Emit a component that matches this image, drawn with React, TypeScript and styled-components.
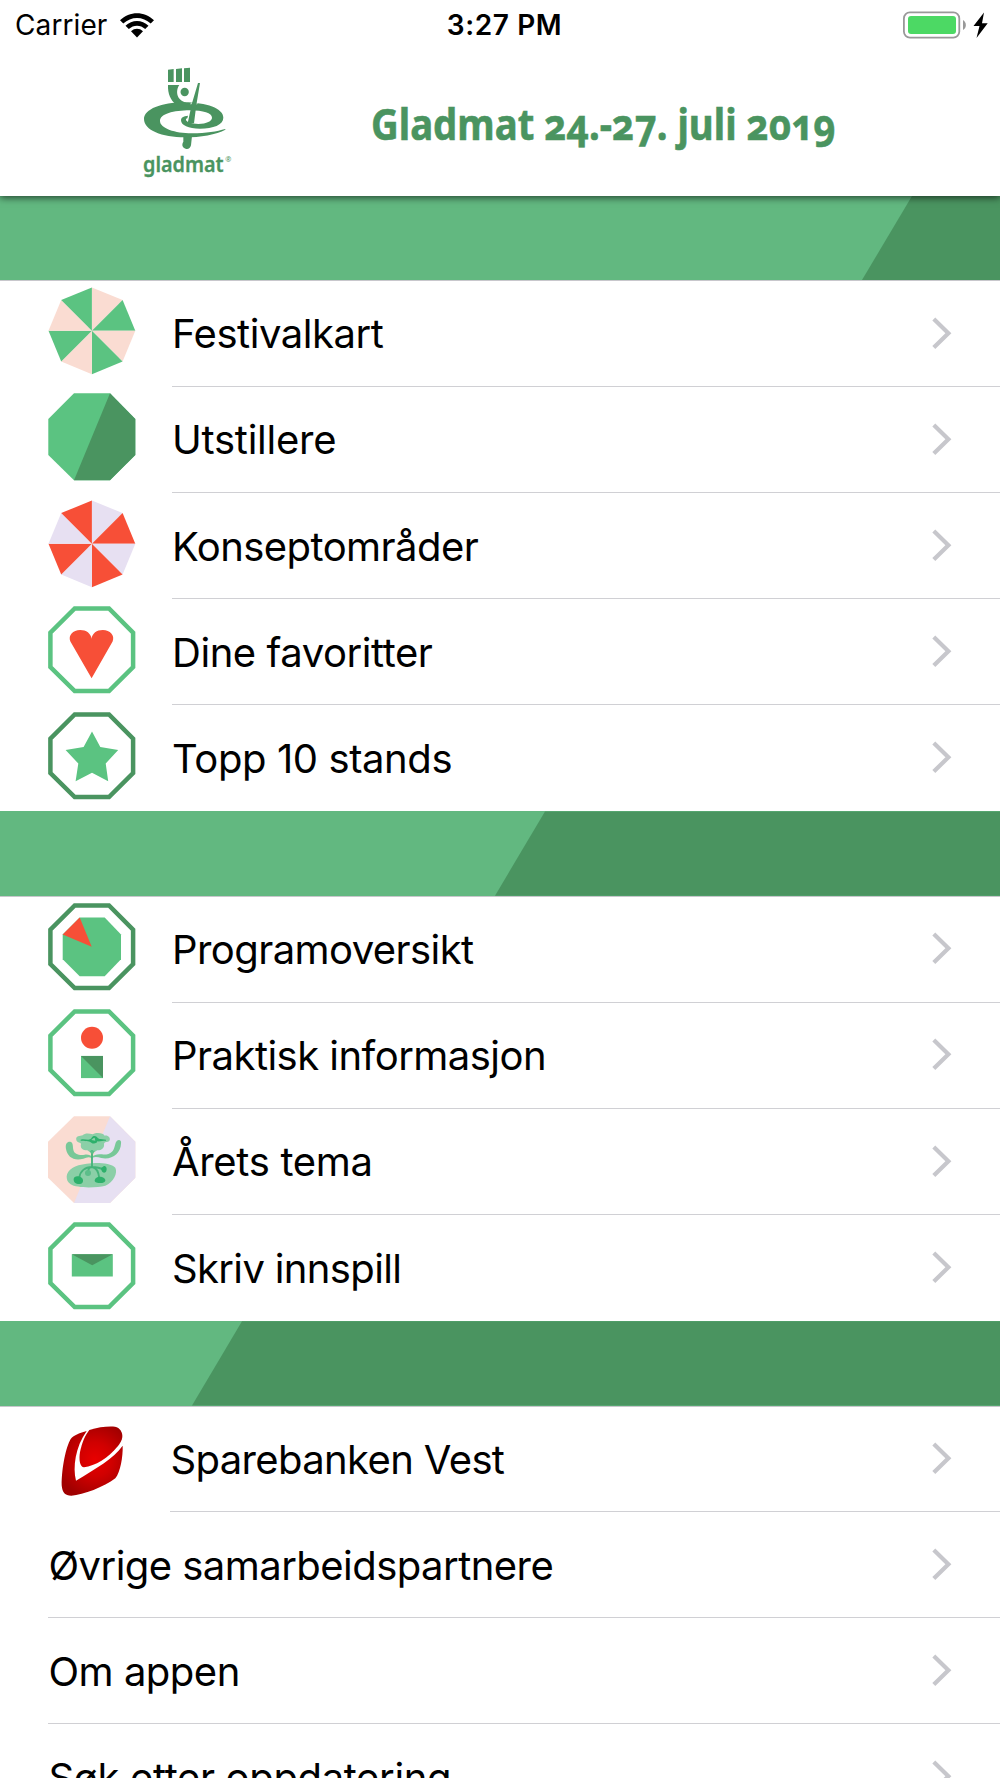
import React from "react";
import styled, { createGlobalStyle } from "styled-components";

const LIGHT = "#5bc381";
const DARK = "#4a9460";
const RED = "#f74f37";
const PEACH = "#fadcd2";
const LILAC = "#e7e0f2";

const Global = createGlobalStyle`
  html, body { margin: 0; padding: 0; background: #fff; }
  body { overflow: hidden; }
`;

const Screen = styled.div`
  width: 1000px;
  height: 1778px;
  overflow: hidden;
  background: #fff;
  color: #000;
  font-family: Inter, "Liberation Sans", sans-serif;
  display: flex;
  flex-direction: column;
`;

const Header = styled.header`
  flex: none;
  height: 196px;
  background: #fff;
  position: relative;
  z-index: 1;
  box-shadow: 0 2px 7px rgba(0, 0, 0, 0.6);
`;

const StatusBar = styled.div`
  height: 50px;
  display: grid;
  grid-template-columns: 1fr auto 1fr;
  align-items: center;
  padding: 0 12px 0 15px;
  font-size: 28px;
  line-height: 50px;
`;

const Carrier = styled.div`
  display: flex;
  align-items: center;
  gap: 13px;
  letter-spacing: 0.1px;
`;

const Clock = styled.div`
  font-weight: 600;
  letter-spacing: 0.6px;
  padding-left: 6px;
`;

const Power = styled.div`
  display: flex;
  justify-content: flex-end;
`;

const Brand = styled.div`
  display: flex;
  height: 140px;
`;

const LogoBox = styled.div`
  margin-left: 120px;
  width: 251px;
`;

const Title = styled.h1`
  margin: 0;
  font: 700 43.5px/50px "Noto Sans", "Open Sans", sans-serif;
  font-feature-settings: "onum" 1;
  color: ${DARK};
  -webkit-text-stroke: 0.6px ${DARK};
  white-space: nowrap;
  padding-top: 48px;
  transform: scaleX(0.881);
  transform-origin: 0 0;
`;

const Band = styled.div<{ $height: number }>`
  flex: none;
  height: ${(p) => p.$height}px;
  box-sizing: border-box;
  background: #62b880;
  border-bottom: 1px solid #c8c7cc;
  display: flex;
`;

const BandShade = styled.div<{ $start: number }>`
  flex: 1;
  margin-left: ${(p) => p.$start}px;
  background: ${DARK};
  clip-path: polygon(50px 0, 100% 0, 100% 100%, 0 100%);
`;

const List = styled.ul<{ $row: number }>`
  flex: none;
  list-style: none;
  margin: 0;
  padding: 0;
  > li { height: ${(p) => p.$row}px; }
`;

const Row = styled.li`
  display: flex;
  padding-left: 48px;
  box-sizing: border-box;
`;

const IconSlot = styled.div<{ $width: number; $top: number }>`
  width: ${(p) => p.$width}px;
  padding-top: ${(p) => p.$top}px;
  box-sizing: border-box;
  svg { display: block; }
`;

const Body = styled.div<{ $last?: boolean }>`
  flex: 1;
  display: flex;
  justify-content: space-between;
  align-items: flex-start;
  padding: 28.4px 48px 0 0;
  box-sizing: border-box;
  border-bottom: 1px solid ${(p) => (p.$last ? "transparent" : "#d0d0d4")};
  svg { display: block; margin-top: 6.2px; }
`;

const Label = styled.span<{ $track: number; $inset?: number }>`
  font-size: 40px;
  line-height: 50px;
  white-space: nowrap;
  padding-left: ${(p) => p.$inset ?? 0}px;
  letter-spacing: ${(p) => p.$track}px;
`;

const OCT = "26,.3 62,.3 87.3,26 87.3,62 62,87.3 26,87.3 .3,62 .3,26";
const OCT_RING = "26.7,2.4 61,2.4 85.1,26.6 85.1,61 61,85.1 26.7,85.1 2.4,61 2.4,26.6";

const Svg = ({ children, viewBox = "0 0 88 88" }: { children: React.ReactNode; viewBox?: string }) => (
  <svg width="88" height="88" viewBox={viewBox}>{children}</svg>
);

const Ring = ({ color }: { color: string }) => (
  <polygon points={OCT_RING} fill="none" stroke={color} strokeWidth="4.5" />
);

const Wheel = ({ a, b }: { a: string; b: string }) => {
  const pt = (i: number) => {
    const t = (i * Math.PI) / 4 - Math.PI / 2;
    return `${43.9 + 43.4 * Math.cos(t)},${43.8 + 43.4 * Math.sin(t)}`;
  };
  return (
    <Svg>
      {[0, 1, 2, 3, 4, 5, 6, 7].map((i) => (
        <polygon key={i} points={`43.9,43.8 ${pt(i)} ${pt(i + 1)}`} fill={i % 2 ? b : a} />
      ))}
    </Svg>
  );
};

const Exhibitors = () => (
  <Svg>
    <polygon points={OCT} fill={LIGHT} />
    <polygon points="62,.3 87.3,26 87.3,62 62,87.3 26,87.3" fill={DARK} />
  </Svg>
);

const Heart = () => (
  <Svg>
    <Ring color={LIGHT} />
    <path d="M43.6 72.3 22.4 35.4C19.8 29.4 25 24 32.2 24c6 0 10.8 3.4 11.4 8.8C44 27.4 48.8 24 54.8 24c7.2 0 12.4 5.4 9.8 11.4Z" fill={RED} />
  </Svg>
);

const Star = () => (
  <Svg>
    <Ring color={DARK} />
    <polygon points="44,19.4 52.3,35.1 70.2,38.1 57.7,51.4 60.2,69.3 44,60.8 27.6,69.3 30.3,51.4 17.6,38.1 35.6,35.1" fill={LIGHT} />
  </Svg>
);

const Programme = () => (
  <Svg>
    <Ring color={DARK} />
    <polygon points="31.7,14.6 56.7,14.6 73,31.6 73,56.3 56.7,73.2 31.7,73.2 14.7,56.3 14.7,31.6" fill={LIGHT} />
    <polygon points="31.7,14.6 14.7,31.6 43.7,43.7" fill={RED} />
  </Svg>
);

const Info = () => (
  <Svg>
    <Ring color={LIGHT} />
    <circle cx="44" cy="28.8" r="11" fill={RED} />
    <rect x="33" y="46.9" width="22" height="22.2" fill={LIGHT} />
    <polygon points="33,46.9 55,46.9 55,69.1" fill={DARK} />
  </Svg>
);

const Theme = () => (
  <Svg viewBox="54 47 264 264">
    <polygon points="132,48 240,48 316,124 316,232 240,308 132,308 54,232 54,124" fill={PEACH} />
    <polygon points="240,48 316,124 316,232 240,308 132,308" fill={LILAC} />
    <g fill="#8bcfa7">
      <path d="M110 228C112 208 134 194 170 190C200 186 243 188 256 202C264 218 250 246 226 256C200 263 140 264 122 252C112 246 110 238 110 228Z" />
      <path d="M139 119C136 106 150 108 158 105C164 98 176 98 188 102C200 95 220 98 224 106C234 104 242 112 239 120C236 128 226 122 222 130C224 142 216 150 202 150L192 156L180 156L172 150C158 150 150 144 153 130C148 124 142 128 139 119Z" />
    </g>
    <g fill="#78c898">
      <path d="M108 146C105 130 112 123 121 124C130 126 128 138 130 148C132 162 150 166 164 163C174 161 184 166 186 170V174C176 168 170 172 160 175C132 183 112 170 108 146Z" />
      <path d="M273 130C275 120 268 117 261 121C254 127 256 144 246 154C238 162 226 164 216 162C202 160 192 164 187 168V172C196 168 204 170 214 173C246 180 272 158 273 130Z" />
    </g>
    <g fill="none" stroke="#45b379" strokeWidth="5.5">
      <path d="M186 150V202M186 200C165 200 150 212 148 232M186 200C200 202 206 216 208 234M186 200C176 200 174 210 174 218M186 200C200 200 210 202 220 208" />
    </g>
    <path d="M179 151h15l-4 9h-7Z" fill="#5cbe8a" />
    <g fill="#2db06b">
      <path d="M131 236C132 226 146 226 155 232C162 238 160 250 150 251C138 252 130 246 131 236Z" />
      <path d="M194 240C196 228 212 226 222 233C230 240 226 248 212 248C202 248 194 248 194 240Z" />
      <path d="M214 208C212 200 220 200 222 197C228 196 232 204 229 212C226 220 216 218 214 208Z" />
      <ellipse cx="174" cy="218" rx="9" ry="9" fill="#5cbe8a" />
      <path fillRule="evenodd" d="M152 118C162 114 172 120 180 117C186 114 186 106 194 107C202 108 202 116 212 116L228 118V121C218 121 210 124 202 123C202 129 190 132 184 127C176 120 164 123 152 121ZM184 119L196 121L194 112C190 112 188 116 184 119Z" />
    </g>
  </Svg>
);

const Envelope = () => (
  <Svg>
    <Ring color={LIGHT} />
    <rect x="23.8" y="32.2" width="41" height="22.3" fill={LIGHT} />
    <polygon points="23.8,32.2 64.8,32.2 44.2,43.3" fill={DARK} />
  </Svg>
);

const BankMark = () => (
  <Svg viewBox="144 338 264 264">
    <defs>
      <radialGradient id="bank" gradientUnits="userSpaceOnUse" cx="285" cy="478" r="115">
        <stop offset="0" stopColor="#e80000" />
        <stop offset="0.45" stopColor="#d00000" />
        <stop offset="1" stopColor="#a00000" />
      </radialGradient>
    </defs>
    <g fill="url(#bank)">
      <path d="M260 392C240 398 222 404 212 416C198 440 185 500 185 555C187 577 195 586 214 586C250 584 312 560 346 534C361 515 369 470 368 436C340 475 290 503 228 541C218 500 226 440 260 392Z" />
      <path d="M268 389C295 380 325 377 345 379C360 382 368 395 367 410C366 420 360 429 354 437C325 473 285 497 252 501C240 500 236 480 240 455C245 430 255 405 268 389Z" />
    </g>
  </Svg>
);

const Logo = () => (
  <svg width="130" height="140" viewBox="0 0 390 420" fill={DARK}>
    <path d="M144 59 161 57V96H144ZM168 57 186 55V96H168ZM192 55 210 53V96H192Z" />
    <path d="M144 105H178C166 122 169 152 200 158L168 164C152 150 143 132 144 105Z" />
    <circle cx="194" cy="126" r="12.5" />
    <path d="M316 239C290 254 240 262 195 262C125 262 72 240 72 207C72 178 125 157 192 157C260 157 310 176 310 203C310 224 280 236 240 236C205 236 183 226 183 211C183 203 190 198 204 197L202 205C196 206 196 213 206 217C215 221 225 222 235 222C260 221 276 213 276 203C276 190 250 181 210 181C160 181 120 192 120 213C120 235 165 250 215 250C260 250 290 244 316 237Z" />
    <path d="M213 163 214 158M230 163 231 159" stroke="#fff" strokeWidth="3" />
    <path d="M234 99H240L229 165 222 220H203L216 160Z" />
    <path d="M190 258H216L213 286C210 298 199 301 189 291C185 284 188 279 190 275Z" />
    <text x="69" y="365" fontFamily="Noto Sans, sans-serif" fontWeight="600" fontSize="67" stroke={DARK} strokeWidth="1" textLength="242" lengthAdjust="spacingAndGlyphs">gladmat</text>
    <text x="316" y="337" fontFamily="Noto Sans, sans-serif" fontSize="22">®</text>
  </svg>
);

const Wifi = () => (
  <svg width="34" height="25" viewBox="0 0 34 25">
    <path d="M0 7.3C9.5-2.2 24.5-2.2 34 7.3L30.7 10.6C23 3 11 3 3.3 10.6Z" />
    <path d="M5.5 12.8C12 6.5 22 6.5 28.5 12.8L25.2 16C20.5 11.5 13.5 11.5 8.8 16Z" />
    <path d="M11 18.3C14.5 15 19.5 15 23 18.3L17 24.4Z" />
  </svg>
);

const Battery = () => (
  <svg width="86" height="28" viewBox="0 0 86 28">
    <rect x="1.9" y="1.4" width="55.4" height="25.2" rx="6" fill="none" stroke="#999" strokeWidth="1.8" />
    <rect x="6" y="5" width="48" height="18" rx="3" fill="#4cd964" />
    <path d="M61 9C64.8 11 64.8 17 61 19Z" fill="#999" />
    <path d="M82 1.5 71.5 15H77.5L74.5 27 85.700 12.3H80Z" />
  </svg>
);

const Chevron = () => (
  <svg width="20" height="34" viewBox="0 0 20 34">
    <path d="M1.8 3 16.4 17.2 1.8 31.6" fill="none" stroke="#c7c7cc" strokeWidth="4.2" />
  </svg>
);

type Item = { label: string; track: number; icon?: React.ReactNode; slot?: number; inset?: number };

type Section = { start: number; band: number; row: number; iconTop: number; items: Item[] };

const sections: Section[] = [
  {
    start: 862,
    band: 85,
    row: 106.08,
    iconTop: 6.4,
    items: [
      { label: "Festivalkart", track: -0.46, icon: <Wheel a={PEACH} b={LIGHT} /> },
      { label: "Utstillere", track: -0.25, icon: <Exhibitors /> },
      { label: "Konseptområder", track: -0.55, icon: <Wheel a={LILAC} b={RED} /> },
      { label: "Dine favoritter", track: -0.44, icon: <Heart /> },
      { label: "Topp 10 stands", track: -0.4, icon: <Star /> },
    ],
  },
  {
    start: 495,
    band: 85.3,
    row: 106.15,
    iconTop: 6.6,
    items: [
      { label: "Programoversikt", track: -0.57, icon: <Programme /> },
      { label: "Praktisk informasjon", track: -0.53, icon: <Info /> },
      { label: "Årets tema", track: -0.33, icon: <Theme /> },
      { label: "Skriv innspill", track: -0.65, icon: <Envelope /> },
    ],
  },
  {
    start: 192,
    band: 85.3,
    row: 105.95,
    iconTop: 6.4,
    items: [
      { label: "Sparebanken Vest", track: -0.64, icon: <BankMark />, slot: 122, inset: 0.5 },
      { label: "Øvrige samarbeidspartnere", track: -0.54, inset: 0.5 },
      { label: "Om appen", track: -0.5, inset: 0.5 },
      { label: "Søk etter oppdatering", track: -0.35, inset: 0.5 },
    ],
  },
];

export default function App() {
  return (
    <Screen>
      <Global />
      <Header>
        <StatusBar>
          <Carrier>Carrier<Wifi /></Carrier>
          <Clock>3:27 PM</Clock>
          <Power><Battery /></Power>
        </StatusBar>
        <Brand>
          <LogoBox><Logo /></LogoBox>
          <Title>Gladmat 24.-27. juli 2019</Title>
        </Brand>
      </Header>
      {sections.map((s) => (
        <React.Fragment key={s.start}>
          <Band $height={s.band}><BandShade $start={s.start} /></Band>
          <List $row={s.row}>
            {s.items.map((it, i) => (
              <Row key={it.label}>
                {it.icon && <IconSlot $width={it.slot ?? 124} $top={s.iconTop}>{it.icon}</IconSlot>}
                <Body $last={i === s.items.length - 1}>
                  <Label $track={it.track} $inset={it.inset}>{it.label}</Label>
                  <Chevron />
                </Body>
              </Row>
            ))}
          </List>
        </React.Fragment>
      ))}
    </Screen>
  );
}
